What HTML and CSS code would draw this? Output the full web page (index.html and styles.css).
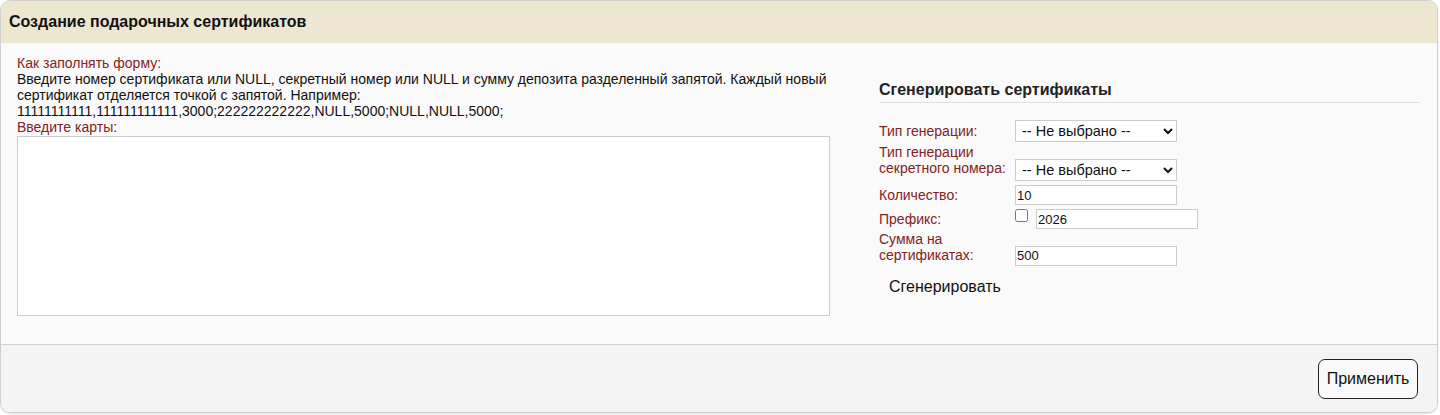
FILE: index.html
```html
<!DOCTYPE html>
<html lang="ru">
<head>
<meta charset="utf-8">
<title>Создание подарочных сертификатов</title>
<link rel="stylesheet" href="styles.css">
</head>
<body>
<div class="panel">
  <div class="panel-header">Создание подарочных сертификатов</div>
  <div class="panel-body">
    <div class="col-left">
      <div class="lbl">Как заполнять форму:</div>
      <div class="txt">Введите номер сертификата или NULL, секретный номер или NULL и сумму депозита разделенный запятой. Каждый новый сертификат отделяется точкой с запятой. Например:</div>
      <div class="txt">11111111111,111111111111,3000;222222222222,NULL,5000;NULL,NULL,5000;</div>
      <div class="lbl">Введите карты:</div>
      <textarea class="cards"></textarea>
    </div>
    <div class="col-right">
      <h2 class="gen-title">Сгенерировать сертификаты</h2>
      <div class="form">
        <div class="row row-select">
          <div class="flabel">Тип генерации:</div>
          <select class="sel"><option>-- Не выбрано --</option></select>
        </div>
        <div class="row row-select two-line">
          <div class="flabel">Тип генерации секретного номера:</div>
          <select class="sel"><option>-- Не выбрано --</option></select>
        </div>
        <div class="row">
          <div class="flabel">Количество:</div>
          <input class="inp" type="text" value="10">
        </div>
        <div class="row">
          <div class="flabel">Префикс:</div>
          <input class="chk" type="checkbox">
          <input class="inp" type="text" value="2026">
        </div>
        <div class="row">
          <div class="flabel">Сумма на сертификатах:</div>
          <input class="inp" type="text" value="500">
        </div>
      </div>
      <button class="gen-btn" type="button">Сгенерировать</button>
    </div>
  </div>
  <div class="panel-footer">
    <button class="apply-btn" type="button">Применить</button>
  </div>
</div>
</body>
</html>
```
FILE: styles.css
```css
html, body {
  margin: 0;
  padding: 0;
  background: #ffffff;
}
body {
  font-family: "Liberation Sans", Arial, sans-serif;
  font-size: 14px;
  color: #111;
}
.panel {
  margin: 0 2px 2px 0;
  border: 1px solid #cfcfcf;
  border-radius: 10px;
  overflow: hidden;
  box-shadow: 0 1px 2px rgba(0,0,0,0.12);
}
.panel-header {
  background: #ede6d0;
  height: 42px;
  line-height: 42px;
  padding-left: 8px;
  font-size: 16px;
  font-weight: bold;
  color: #111;
}
.panel-body {
  background: #fafafa;
  display: grid;
  grid-template-columns: 813px 1fr;
  column-gap: 49px;
  padding: 12px 17px 28px 16px;
}
.col-left {
  display: flex;
  flex-direction: column;
  line-height: 16px;
}
.lbl {
  color: #822222;
}
.txt {
  color: #111;
}
.cards {
  display: block;
  width: 813px;
  height: 180px;
  box-sizing: border-box;
  border: 1px solid #cccccc;
  background: #fff;
  margin: 1px 0 0 0;
  resize: none;
  padding: 2px;
}
.col-right {
  display: flex;
  flex-direction: column;
  align-items: flex-start;
}
.gen-title {
  align-self: stretch;
  margin: 26px 0 0 0;
  font-size: 16px;
  line-height: 18px;
  font-weight: bold;
  color: #222;
  padding-bottom: 3px;
  border-bottom: 1px solid #e2e2e2;
}
.form {
  margin-top: 17px;
  display: flex;
  flex-direction: column;
  row-gap: 2px;
}
.row {
  display: flex;
  align-items: last baseline;
}
.row-select {
  align-items: flex-end;
}
.flabel {
  width: 130px;
  margin-right: 6px;
  color: #822222;
  line-height: 16px;
}
.row-select .flabel {
  padding-bottom: 3px;
}
.row-select.two-line .flabel {
  padding-bottom: 5px;
}
.sel {
  width: 162px;
  height: 22px;
  box-sizing: border-box;
  border: 1px solid #cccccc;
  background: #fff;
  font-family: "Liberation Sans", Arial, sans-serif;
  font-size: 14.5px;
  color: #111;
  padding: 0 2px;
  margin: 0;
  border-radius: 0;
}
.inp {
  width: 162px;
  height: 20px;
  box-sizing: border-box;
  border: 1px solid #cccccc;
  background: #fff;
  font-family: "Liberation Sans", Arial, sans-serif;
  font-size: 13px;
  color: #111;
  padding: 0 1px;
  margin: 2px 0 0 0;
}
.chk {
  align-self: flex-start;
  width: 13px;
  height: 13px;
  margin: 2px 8px 0 0;
}
.gen-btn {
  margin-top: 3px;
  background: transparent;
  border: none;
  padding: 9px 10px;
  font-family: "Liberation Sans", Arial, sans-serif;
  font-size: 16px;
  color: #111;
}
.panel-footer {
  background: #f4f4f4;
  border-top: 1px solid #cfcfcf;
  padding: 14px 19px 13px 0;
  display: flex;
  justify-content: flex-end;
}
.apply-btn {
  width: 100px;
  height: 40px;
  border: 1px solid #222;
  border-radius: 7px;
  background: #f9f9f9;
  font-family: "Liberation Sans", Arial, sans-serif;
  font-size: 16px;
  color: #111;
  padding: 0;
}
```
